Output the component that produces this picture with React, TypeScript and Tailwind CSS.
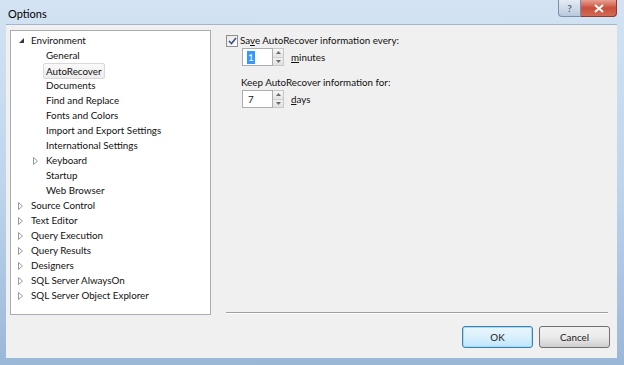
import React from "react";

type Node = {
  label: string;
  level: 0 | 1;
  arrow?: "open" | "closed";
  selected?: boolean;
};

const nodes: Node[] = [
  { label: "Environment", level: 0, arrow: "open" },
  { label: "General", level: 1 },
  { label: "AutoRecover", level: 1, selected: true },
  { label: "Documents", level: 1 },
  { label: "Find and Replace", level: 1 },
  { label: "Fonts and Colors", level: 1 },
  { label: "Import and Export Settings", level: 1 },
  { label: "International Settings", level: 1 },
  { label: "Keyboard", level: 1, arrow: "closed" },
  { label: "Startup", level: 1 },
  { label: "Web Browser", level: 1 },
  { label: "Source Control", level: 0, arrow: "closed" },
  { label: "Text Editor", level: 0, arrow: "closed" },
  { label: "Query Execution", level: 0, arrow: "closed" },
  { label: "Query Results", level: 0, arrow: "closed" },
  { label: "Designers", level: 0, arrow: "closed" },
  { label: "SQL Server AlwaysOn", level: 0, arrow: "closed" },
  { label: "SQL Server Object Explorer", level: 0, arrow: "closed" },
];

const Arrow = ({ kind }: { kind?: "open" | "closed" }) => {
  if (kind === "open")
    return (
      <svg width="7" height="7" viewBox="0 0 7 7">
        <path d="M6 1 L6 6 L1 6 Z" fill="#3a3a3a" />
      </svg>
    );
  if (kind === "closed")
    return (
      <svg width="6" height="8" viewBox="0 0 6 8">
        <path d="M0.5 0.5 L4.5 4 L0.5 7.5 Z" fill="none" stroke="#9a9a9a" />
      </svg>
    );
  return null;
};

const Spinner = ({ value, selected }: { value: string; selected?: boolean }) => (
  <div className="flex h-[18px]">
    <div className="w-[31px] h-full border border-[#abadb3] bg-white flex items-center pl-[4px]">
      <span className={selected ? "bg-[#3399ff] text-white leading-[13px] px-[1px]" : "px-[1px]"}>
        {value}
      </span>
    </div>
    <div className="w-[11px] h-full flex flex-col border border-l-0 border-[#c8c8c8]">
      <div className="flex-1 flex items-center justify-center bg-gradient-to-b from-[#f6f6f6] to-[#e4e4e4] border-b border-[#d0d0d0]">
        <svg width="5" height="3" viewBox="0 0 5 3">
          <path d="M0 3 L2.5 0 L5 3 Z" fill="#6a6a6a" />
        </svg>
      </div>
      <div className="flex-1 flex items-center justify-center bg-gradient-to-b from-[#f0f0f0] to-[#e0e0e0]">
        <svg width="5" height="3" viewBox="0 0 5 3">
          <path d="M0 0 L2.5 3 L5 0 Z" fill="#6a6a6a" />
        </svg>
      </div>
    </div>
  </div>
);

export default function App() {
  return (
    <div
      className="w-[624px] h-[365px] flex flex-col bg-gradient-to-b from-[#d3e3f3] via-[#bfd5ed] to-[#9bb7d8] text-[#111] text-[9.8px] overflow-hidden"
      style={{ fontFamily: "Lato, 'Noto Sans', sans-serif" }}
    >
      {/* title bar */}
      <div className="h-[24px] flex items-start justify-between shrink-0">
        <span className="pl-[8px] pt-[6px] text-[11px] text-black">Options</span>
        <div className="flex mr-[7px]">
          <div className="w-[23px] h-[17px] rounded-bl-[4px] border border-t-0 border-[#7b8ea8] bg-gradient-to-b from-[#e4ecf5] to-[#b9c9dc] flex items-center justify-center text-[10px] text-[#5a6a80] font-bold">
            ?
          </div>
          <div className="w-[36px] h-[17px] rounded-br-[4px] border border-t-0 border-l-0 border-[#8a3a30] bg-gradient-to-b from-[#e8a093] via-[#c94f3b] to-[#d36a55] flex items-center justify-center">
            <svg width="10" height="9" viewBox="0 0 10 9">
              <path d="M1 1 L9 8 M9 1 L1 8" stroke="white" strokeWidth="2" />
            </svg>
          </div>
        </div>
      </div>

      {/* client area */}
      <div className="flex-1 mx-[6px] mb-[7px] mr-[7px] bg-[#f0f0f0] border-t border-[#a5b5c8] flex flex-col">
        <div className="flex pt-[5px] pl-[4px]">
          <div className="w-[201px] h-[285px] bg-white border border-[#a9adb3] pt-[2px]">
            {nodes.map((n) => (
              <div
                key={n.label}
                className={`h-[15px] flex items-center ${n.level === 0 ? "pl-[7px]" : "pl-[22px]"}`}
              >
                <div className="w-[13px] flex items-center">
                  <Arrow kind={n.arrow} />
                </div>
                <span
                  className={
                    n.selected
                      ? "-ml-[3px] px-[2px] leading-[14px] border border-[#d9d9d9] rounded-[2px] bg-gradient-to-b from-[#fafafa] to-[#ececec]"
                      : ""
                  }
                >
                  {n.label}
                </span>
              </div>
            ))}
          </div>

          <div className="flex-1 flex flex-col ml-[15px] mr-[9px]">
            <div className="flex-1 flex flex-col pt-[4px]">
              <div className="flex items-center h-[13px]">
                <div className="w-[12px] h-[12px] border border-[#8e8f8f] bg-gradient-to-br from-[#e6e6e6] to-white flex items-center justify-center">
                  <svg width="9" height="8" viewBox="0 0 9 8">
                    <path d="M1 4 L3.5 6.5 L8 1" fill="none" stroke="#3b4f8a" strokeWidth="1.6" />
                  </svg>
                </div>
                <span className="ml-[2px]">
                  Sa<span className="underline">v</span>e AutoRecover information every:
                </span>
              </div>
              <div className="flex items-center mt-[1px] ml-[16px] gap-[7px]">
                <Spinner value="1" selected />
                <span>
                  <span className="underline">m</span>inutes
                </span>
              </div>
              <div className="mt-[10px] ml-[15px] h-[12px] leading-[12px]">
                Keep AutoRecover information for:
              </div>
              <div className="flex items-center mt-[2px] ml-[16px] gap-[7px]">
                <Spinner value="7" />
                <span>
                  <span className="underline">d</span>ays
                </span>
              </div>
            </div>
            <div className="h-[2px] border-t border-[#a0a0a0] border-b border-b-white mb-[1px]" />
          </div>
        </div>

        <div className="flex justify-end gap-[6px] mt-[11px] mr-[7px]">
          <button className="w-[71px] h-[22px] rounded-[3px] border border-[#3c7fb1] bg-gradient-to-b from-[#eaf6fd] via-[#d9f0fc] to-[#bee6fd] text-[#1a1a1a] shadow-[inset_0_0_0_1px_#a6d9f4]">
            OK
          </button>
          <button className="w-[71px] h-[22px] rounded-[3px] border border-[#707070] bg-gradient-to-b from-[#f2f2f2] via-[#ebebeb] to-[#cfcfcf] text-[#1a1a1a]">
            Cancel
          </button>
        </div>
      </div>
    </div>
  );
}
